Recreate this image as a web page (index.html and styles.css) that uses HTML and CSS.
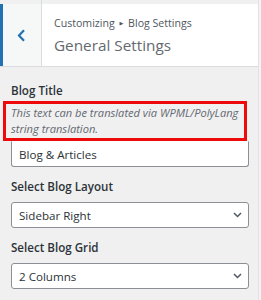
FILE: index.html
```html
<!DOCTYPE html>
<html lang="en">
  <head>
    <meta charset="UTF-8" />
    <meta name="viewport" content="width=device-width, initial-scale=1.0" />
    <title>General Settings</title>
    <link rel="stylesheet" href="styles.css">
  </head>

  <body>
    <div class="panel">
      <div class="topbar">
        <div class="topbar-left"></div>
      </div>

      <div class="header">
        <a href="#" class="back">
          <svg width="9" height="13" viewBox="0 0 9 13">
            <path d="M7 1.2 L2 6.5 L7 11.8" fill="none" stroke="#2271b1" stroke-width="2.2" />
          </svg>
        </a>
        <div class="title">
          <div class="crumb">Customizing <span class="arrow">&#9654;</span> Blog Settings</div>
          <h1>General Settings</h1>
        </div>
      </div>

      <div class="controls">
        <label class="label">Blog Title</label>
        <p class="desc">This text can be translated via WPML/PolyLang<br>string translation.</p>
        <div class="field">Blog &amp; Articles</div>

        <label class="label">Select Blog Layout</label>
        <div class="field select">
          <span>Sidebar Right</span>
          <svg width="9" height="6" viewBox="0 0 9 6">
            <path d="M1 1 L4.5 4.5 L8 1" fill="none" stroke="#50575e" stroke-width="1.5" />
          </svg>
        </div>

        <label class="label">Select Blog Grid</label>
        <div class="field select">
          <span>2 Columns</span>
          <svg width="9" height="6" viewBox="0 0 9 6">
            <path d="M1 1 L4.5 4.5 L8 1" fill="none" stroke="#50575e" stroke-width="1.5" />
          </svg>
        </div>
      </div>
    </div>
  </body>
</html>
```

FILE: styles.css
```css
* {
  font-family: "Open Sans", sans-serif;
  margin: 0;
  padding: 0;
  box-sizing: border-box;
}

body {
  background-color: #f3f3f4;
  color: #1d2327;
}

.panel {
  width: 259px;
  height: 300px;
  background-color: #f0f0f1;
  border-right: 1px solid #e2e2e4;
}

.topbar {
  height: 4px;
}

.topbar-left {
  width: 42px;
  height: 4px;
  border-right: 1px solid #dcdcde;
}

.header {
  display: flex;
  height: 63px;
  background-color: #ffffff;
  border-bottom: 1px solid #dcdcde;
}

.back {
  display: flex;
  align-items: center;
  justify-content: center;
  width: 42px;
  background-color: #f6f7f7;
  border-left: 3px solid #2271b1;
  border-right: 1px solid #dcdcde;
  padding-right: 2px;
}

.title {
  padding: 12px 0 0 12px;
}

.crumb {
  font-size: 10.6px;
  line-height: 14px;
  color: #50575e;
}

.arrow {
  font-family: "DejaVu Sans", sans-serif;
  font-size: 5px;
  vertical-align: 2px;
  margin: 0 2px;
}

h1 {
  margin-top: 4px;
  font-size: 15.3px;
  line-height: 22px;
  font-weight: 400;
  color: #646970;
}

.controls {
  display: flex;
  flex-direction: column;
  padding: 16px 9px 0 11px;
}

.label {
  font-size: 11.6px;
  line-height: 16px;
  font-weight: 600;
  color: #2c3338;
  margin-bottom: 2px;
}

.desc {
  margin-left: -8px;
  width: 244px;
  height: 40px;
  padding: 1px 0 0 5px;
  border: 3px solid #ee0a0a;
  font-size: 11.1px;
  line-height: 16px;
  font-style: italic;
  white-space: nowrap;
  color: #646970;
}

.field {
  display: flex;
  align-items: center;
  height: 26px;
  padding: 0 7px;
  background-color: #ffffff;
  border: 1px solid #8c8f94;
  border-radius: 3px;
  font-size: 11.6px;
  color: #2c3338;
  margin-bottom: 12px;
}

.desc + .field {
  border-top-color: transparent;
  border-top-left-radius: 0;
  border-top-right-radius: 0;
}

.label + .field {
  margin-top: 5px;
}

.select {
  justify-content: space-between;
  padding-right: 6px;
}
```
